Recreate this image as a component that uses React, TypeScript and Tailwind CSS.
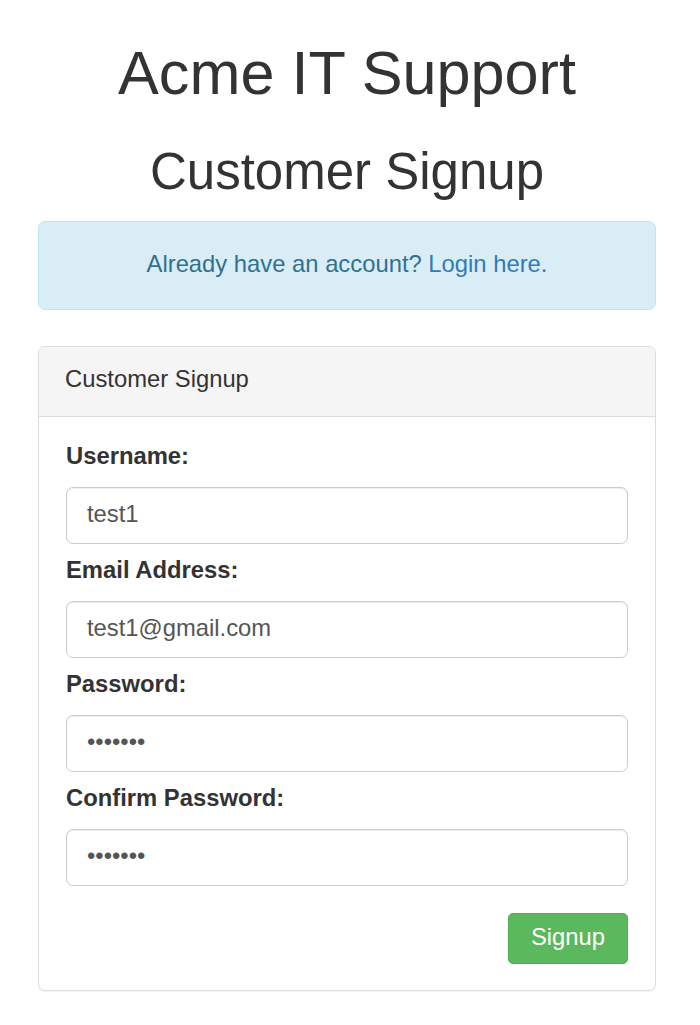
const fields = [
  { label: "Username:", type: "text", value: "test1" },
  { label: "Email Address:", type: "email", value: "test1@gmail.com" },
  { label: "Password:", type: "password", value: "secret1" },
  { label: "Confirm Password:", type: "password", value: "secret1" },
];

/** Signup form, Bootstrap 3 look at 1.7x. */
export default function App() {
  return (
    <div className="min-h-[1025px] bg-white font-['Liberation_Sans',Arial,sans-serif] text-[23.8px] leading-[34px] text-[#333]">
      <div className="ml-[38px] w-[618px] pt-[40px]">
        <h1 className="text-center text-[61.2px] leading-[67px] font-normal">Acme IT Support</h1>
        <h2 className="mt-[37px] text-center text-[51px] leading-[56px] font-normal">Customer Signup</h2>

        <div className="mt-[21px] rounded-[7px] border border-[#bce8f1] bg-[#d9edf7] pt-[24.5px] pb-[28.5px] text-center text-[#31708f]">
          Already have an account?{" "}
          <a href="#" className="text-[#337ab7]">
            Login here.
          </a>
        </div>

        <div className="mt-[36px] rounded-[7px] border border-[#ddd] bg-white shadow-[0_1px_1px_rgba(0,0,0,0.05)]">
          <div className="rounded-t-[6px] border-b border-[#ddd] bg-[#f5f5f5] px-[26px] pt-[15px] pb-[20px]">
            Customer Signup
          </div>
          <form className="px-[27px] pt-[22px] pb-[26px]" onSubmit={(e) => e.preventDefault()}>
            {fields.map((f, i) => (
              <div key={f.label} className={i > 0 ? "mt-[9px]" : ""}>
                <label className="mb-[14px] block font-bold">{f.label}</label>
                <input
                  type={f.type}
                  defaultValue={f.value}
                  readOnly
                  className="block h-[57px] w-full rounded-[7px] border border-[#ccc] px-[20px] pb-[4px] text-[23.8px] text-[#555] shadow-[inset_0_1px_1px_rgba(0,0,0,0.075)] outline-none"
                />
              </div>
            ))}
            <div className="mt-[27px] flex justify-end">
              <button
                type="submit"
                className="h-[51px] w-[120px] rounded-[5px] border border-[#4cae4c] bg-[#5cb85c] pb-[3px] text-[23.8px] text-white"
              >
                Signup
              </button>
            </div>
          </form>
        </div>
      </div>
    </div>
  );
}
